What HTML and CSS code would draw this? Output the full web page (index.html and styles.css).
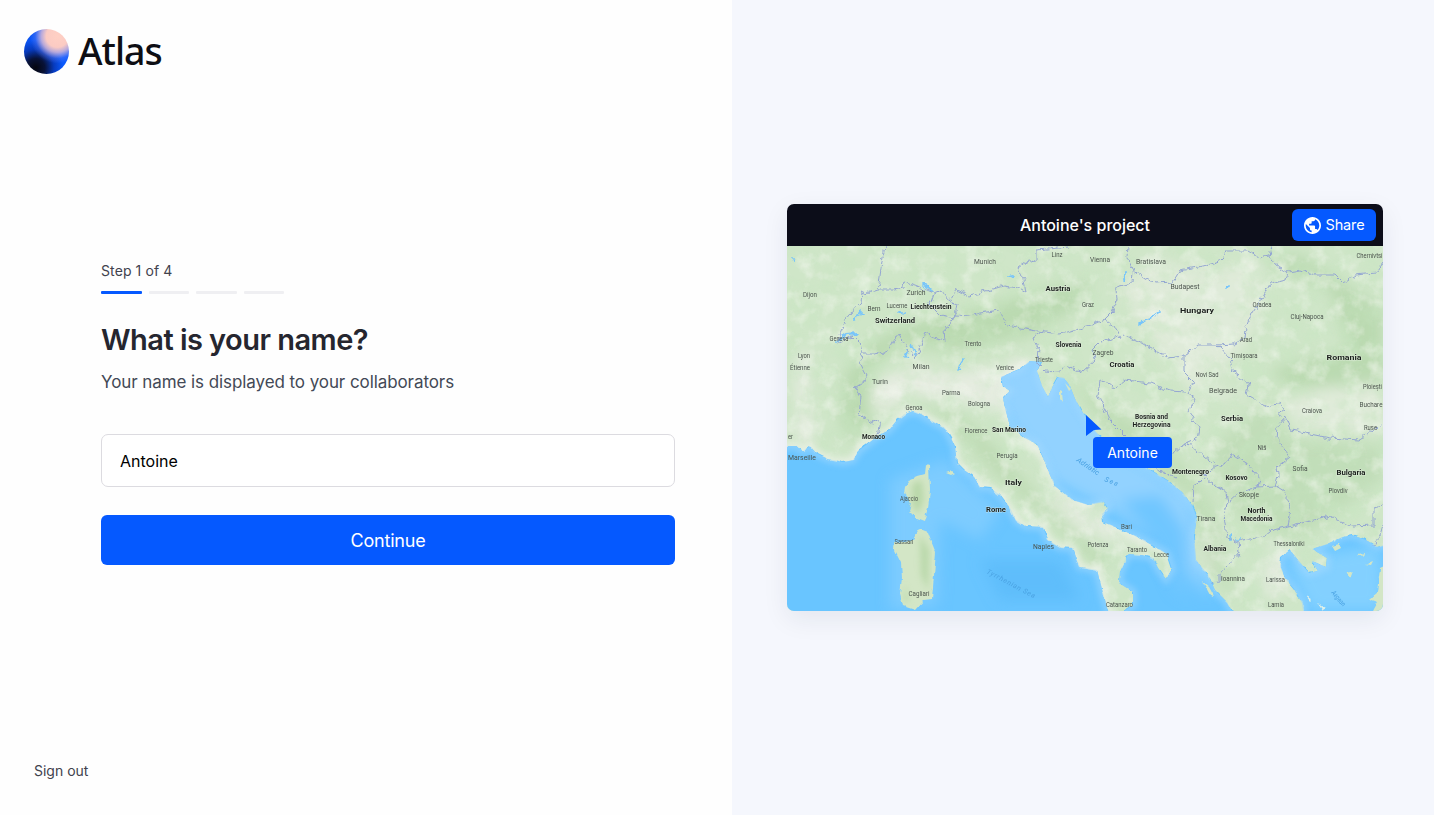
FILE: index.html
```html
<!DOCTYPE html>
<html lang="en">
<head>
	<meta charset="UTF-8">
	<title>Atlas</title>
	<link rel="stylesheet" href="styles.css">
</head>
<body>
<div class="page">
	<div class="left">
		<div class="logo">
			<div class="ball"></div>
			<span>Atlas</span>
		</div>
		<form class="step-form">
			<div class="step">Step 1 of 4</div>
			<div class="bars"><i class="on"></i><i></i><i></i><i></i></div>
			<h1>What is your name?</h1>
			<p>Your name is displayed to your collaborators</p>
			<input type="text" value="Antoine" aria-label="Name">
			<button type="button">Continue</button>
		</form>
		<a class="signout">Sign out</a>
	</div>
	<div class="right">
		<div class="card">
			<div class="bar">
				<span class="title">Antoine's project</span>
				<div class="share">
					<svg viewBox="2 2 20 20" width="17" height="17"><path fill="#fff" d="M12 2C6.48 2 2 6.48 2 12s4.48 10 10 10 10-4.48 10-10S17.52 2 12 2zm-1 17.93c-3.95-.49-7-3.85-7-7.93 0-.62.08-1.21.21-1.79L9 15v1c0 1.1.9 2 2 2v1.93zm6.9-2.54c-.26-.81-1-1.39-1.9-1.39h-1v-3c0-.55-.45-1-1-1H8v-2h2c.55 0 1-.45 1-1V7h2c1.1 0 2-.9 2-2v-.41c2.93 1.19 5 4.06 5 7.41 0 2.08-.8 3.97-2.1 5.39z"/></svg>
					<span>Share</span>
				</div>
			</div>
			<div class="map">
			<svg viewBox="787 246 596 365" width="596" height="365">
				<defs>
					<filter id="soft" x="-30%" y="-30%" width="160%" height="160%"><feGaussianBlur stdDeviation="7"/></filter>
					<filter id="soft2"><feGaussianBlur stdDeviation="3"/></filter>
					<filter id="rough" filterUnits="userSpaceOnUse" x="787" y="246" width="596" height="365">
						<feTurbulence type="fractalNoise" baseFrequency="0.16" numOctaves="2" seed="4"/>
						<feDisplacementMap in="SourceGraphic" scale="7" xChannelSelector="R" yChannelSelector="G"/>
					</filter>
					<filter id="coast" filterUnits="userSpaceOnUse" x="780" y="240" width="610" height="380">
						<feTurbulence type="fractalNoise" baseFrequency="0.12" numOctaves="2" seed="9"/>
						<feDisplacementMap in="SourceGraphic" scale="5" xChannelSelector="R" yChannelSelector="G"/>
					</filter>
					<!-- terrain relief, dark valleys and pale peaks -->
					<filter id="relief" filterUnits="userSpaceOnUse" x="787" y="246" width="596" height="365">
						<feTurbulence type="fractalNoise" baseFrequency="0.05" numOctaves="4" seed="21"/>
						<feColorMatrix values="0 0 0 0 .58  0 0 0 0 .79  0 0 0 0 .54  2.6 0 0 0 -1.1"/>
					</filter>
					<filter id="peaks" filterUnits="userSpaceOnUse" x="787" y="246" width="596" height="365">
						<feTurbulence type="fractalNoise" baseFrequency="0.055" numOctaves="4" seed="5"/>
						<feColorMatrix values="0 0 0 0 .93  0 0 0 0 .95  0 0 0 0 .9  0 2.6 0 0 -1.25"/>
					</filter>
					<clipPath id="seaclip"><use href="#tyr"/><use href="#adr"/><use href="#aeg"/></clipPath>
				</defs>
				<rect x="787" y="246" width="596" height="365" fill="#cfe6c8"/>
				<g filter="url(#soft)">
					<g fill="#e5ece0">
						<path d="M875 385L900 366L960 372L1000 366L1030 352L1040 360L1005 385L1005 415L960 402L915 393L882 412L872 405Z"/>
						<path d="M1120 290L1150 256L1200 270L1260 262L1262 310L1245 345L1210 385L1260 400L1200 400L1170 365L1145 335Z" opacity=".7"/>
						<path d="M1280 400L1383 372L1383 430L1300 430Z" opacity=".7"/>
						<path d="M795 360L808 345L812 440L798 450Z"/>
						<path d="M1040 490L1075 500L1120 530L1165 560L1130 545L1080 530Z"/>
						<path d="M1198 530L1220 530L1220 575L1202 565Z"/>
						<path d="M1270 545L1290 548L1283 600L1262 590Z"/>
					</g>
					<g fill="#b4d5a9">
						<path d="M840 420L845 375L868 345L905 325L980 308L1050 288L1090 280L1080 305L1030 335L960 350L900 345L870 370L870 425L850 440Z" opacity=".75"/>
						<path d="M915 403L960 415L1000 450L1050 510L1110 560L1095 570L1060 530L990 470L945 420Z" opacity=".6"/>
						<path d="M1065 375L1100 400L1160 440L1210 500L1235 600L1205 560L1190 495L1120 445Z" opacity=".6"/>
						<path d="M1262 260L1300 255L1383 310L1383 385L1290 388L1270 370L1350 350L1330 290Z" opacity=".75"/>
						<path d="M1210 450L1270 400L1290 440L1383 445L1383 480L1300 540L1240 520Z" opacity=".5"/>
					</g>
				</g>
				<rect x="787" y="246" width="596" height="365" filter="url(#relief)" opacity=".5"/>
				<rect x="787" y="246" width="596" height="365" filter="url(#peaks)" opacity=".5"/>
				<!-- pale strip of land along the shore -->
				<g fill="none" stroke="#edf2e8" stroke-width="7" filter="url(#soft2)" opacity=".8">
					<use href="#tyr"/><path d="M1167 554L1150 544L1120 529L1102 514M1088 505L1055 486L1043 457L1025 438L1006 412L1003 377L1030 361"/>
				</g>

				<g filter="url(#coast)">
					<g fill="#69c5ff">
						<path id="tyr" d="M780 446L797 446L803 451L810 446L816 453L828 459L843 462L853 460L858 451L870 442L878 436L889 430L897 420L905 414L913 411L921 414L932 421L945 428L951 438L955 447L957 463L964 470L974 477L980 487L990 488L1000 495L1010 508L1016 520L1025 526L1043 527L1048 540L1060 547L1073 548L1077 560L1080 567L1097 570L1101 585L1104 597L1112 625L770 625Z"/>
						<path id="adr" d="M1124 625L1124 611L1133 605L1133 592L1119 583L1120 572L1128 554L1142 555L1153 558L1158 568L1166 579L1172 569L1167 554L1150 544L1135 536L1120 529L1103 522L1102 514L1108 508L1104 502L1088 505L1072 500L1055 486L1050 475L1043 457L1037 444L1025 438L1010 426L1006 412L1003 398L1010 391L1003 386L1001 377L1020 369L1030 361L1041 362L1037 371L1042 386L1048 397L1053 386L1058 377L1064 378L1070 386L1075 399L1083 413L1095 431L1110 447L1130 459L1152 471L1168 481L1182 492L1192 505L1197 518L1194 535L1196 560L1208 575L1215 590L1227 602L1240 625Z"/>
						<path id="aeg" d="M1305 625L1302 603L1294 589L1285 578L1280 566L1281 557L1290 550L1298 560L1309 573L1318 571L1312 561L1326 567L1327 558L1312 549L1327 544L1342 537L1352 535L1366 540L1378 547L1400 540L1400 625Z"/>
					</g>
				</g>
				<g clip-path="url(#seaclip)">
					<g filter="url(#soft)">
						<path d="M1000 350L1060 370L1120 450L1190 495L1210 600L1180 560L1120 515L1050 480L1000 410Z" fill="#92d2ff"/>
						<path d="M1120 500L1160 495L1185 530L1190 600L1175 590L1150 535Z" fill="#6fc6ff"/>
						<path d="M890 480L945 460L1000 510L980 540L940 520L938 605L890 610Z" fill="#83cdff" opacity=".8"/>
						<path d="M980 560L1060 560L1080 600L1000 600Z" fill="#5fbdfb"/>
						<path d="M1285 560L1380 545L1383 611L1310 611Z" fill="#83d0ff"/>
					</g>
					<g fill="none" stroke="#a5daff" stroke-width="7" filter="url(#soft2)" opacity=".6">
						<use href="#tyr"/><use href="#adr"/><use href="#aeg"/>
					</g>
				</g>
				<!-- islands -->
				<g filter="url(#coast)" fill="#d3e6c6">
					<path d="M905 488L911 479L918 476L925 474L926 465L929 466L930 490L928 508L924 521L916 518L909 511L911 502L904 494Z"/>
					<path d="M895 542L903 543L913 539L920 529L928 532L931 540L936 552L934 575L932 599L924 600L915 610L903 606L900 594L902 578L901 563L894 549Z"/>
					<path d="M946 473l6 -2l3 2l-4 2Z"/>
					<path d="M1060 390l2 1l1 12l-3 -4ZM1065 383l6 6l-2 2ZM1069 397l5 2ZM1203 582l6 5l5 9l-4 -1Z"/>
					<path d="M1332 546l7 -2l2 4l-6 3ZM1346 573l8 -2l-3 8ZM1365 565l8 -3l-2 4ZM1358 555l6 -1l-3 3ZM1380 568l10 -5v55h-20l4 -9l4 -7l-9 -3l8 -7Z"/>
					<path d="M1306 596l6 3l-2 2ZM1318 603l8 5l-3 2ZM1335 595l4 3Z" fill="#e0f0e8"/>
				</g>
				<g filter="url(#soft2)" fill="#a9cf98" opacity=".6">
					<path d="M912 484L922 480L924 500L918 514L912 505ZM920 535L929 550L928 590L921 575ZM905 585L909 600L904 602Z"/>
				</g>
				<!-- lakes -->
				<g filter="url(#rough)" fill="none" stroke="#78c5fa" stroke-width="1.8" stroke-linecap="round">
					<path d="M1138 323L1150 319L1160 312M836 341L846 335L858 334M922 284L932 291M853 318L862 313M905 357L908 350M916 355L912 345M959 371L963 358M1124 281L1125 274M1008 277L1013 276M1230 535L1231 541M1237 541L1239 538M1226 290L1229 286M899 312L905 313M792 259L794 260"/>
				</g>
				<!-- borders -->
				<g filter="url(#rough)" fill="none" stroke="#94a6d2" stroke-width="1" stroke-linejoin="round">
					<path d="M885 246L882 262L878 290L866 294L862 292L861 302L848 316L840 333L837 343L852 336L859 343L862 354L859 361L867 376L863 382L855 387L861 396L859 415L872 423L881 420L878 435"/>
					<path d="M878 290L893 290L903 288L904 282L915 285L927 290L934 293L941 290L950 301L956 290L970 296L990 290L1003 286L1018 288L1026 293L1024 280L1018 268L1026 262L1036 260L1036 250L1070 247"/>
					<path d="M862 354L875 354L889 351L895 339L899 334L907 348L915 357L921 346L925 332L933 338L945 341L944 328L951 324L955 315L969 316L980 313L1000 310L1004 324L1030 330L1060 334L1090 326L1104 320L1112 312L1117 300L1116 287L1132 283L1133 270L1127 257L1128 246"/>
					<path d="M934 293L930 305L940 315L955 318L957 304L950 301"/>
					<path d="M1104 320L1115 328L1120 337L1100 342L1092 350L1096 360L1083 372L1068 366L1058 372L1045 371L1037 363L1038 347L1034 337L1044 330"/>
					<path d="M1133 270L1144 278L1155 283L1173 282L1180 270L1198 267L1210 264L1222 260L1225 251L1248 251L1259 258L1269 256L1271 246M1269 256L1276 266L1288 272L1300 270L1315 275L1335 275L1343 283L1355 275L1376 273L1383 263"/>
					<path d="M1288 272L1286 280L1270 284L1262 299L1251 315L1246 328L1245 338L1234 344L1216 345L1197 345L1184 356L1168 358L1150 348L1138 341L1122 333"/>
					<path d="M1218 346L1230 359L1233 371L1249 384L1247 395L1262 404L1270 408L1279 401L1284 409L1277 414L1288 420L1291 430L1310 434L1330 438L1360 440L1372 430L1383 425"/>
					<path d="M1184 356L1184 372L1194 382L1188 394L1195 398L1188 412L1200 428L1198 438L1182 445L1192 446L1216 466L1228 462L1232 454L1248 464L1260 478L1258 487"/>
					<path d="M1186 392L1170 391L1150 383L1125 380L1115 388L1100 380L1098 395L1110 420L1126 436M1146 458L1160 470L1175 478"/>
					<path d="M1182 445L1172 454L1167 468M1216 466L1205 475L1213 484L1226 492L1228 503L1240 492L1257 487L1275 486L1278 476L1277 468L1290 457L1276 438L1277 428L1285 418"/>
					<path d="M1193 502L1194 485L1205 478M1228 503L1224 515L1227 538L1238 543L1239 553L1228 566L1219 574L1219 582L1211 583M1238 541L1262 537L1270 531L1288 526L1291 508L1283 491L1275 486M1288 526L1315 520L1330 516L1350 526L1374 525L1374 508L1383 506M1374 546L1380 535L1383 525"/>
				</g>
				<g class="sea">
					<text transform="translate(1076 461) rotate(34)" textLength="26" lengthAdjust="spacingAndGlyphs">Adriatic</text>
					<text transform="translate(1104 481) rotate(22)" textLength="14">Sea</text>
					<text transform="translate(986 573) rotate(28)" textLength="54">Tyrrhenian Sea</text>
					<text transform="translate(1331 593) rotate(50)" textLength="18" lengthAdjust="spacingAndGlyphs">Aegean</text>
				</g>
				<g class="city">
					<text x="985" y="264" textLength="22" lengthAdjust="spacingAndGlyphs">Munich</text>
					<text x="1057" y="257" textLength="11" lengthAdjust="spacingAndGlyphs">Linz</text>
					<text x="1100" y="262" textLength="20" lengthAdjust="spacingAndGlyphs">Vienna</text>
					<text x="1151" y="264" textLength="30" lengthAdjust="spacingAndGlyphs">Bratislava</text>
					<text x="1369.500" y="258" textLength="26" lengthAdjust="spacingAndGlyphs">Chernivtsi</text>
					<text x="1185" y="289" textLength="29" lengthAdjust="spacingAndGlyphs">Budapest</text>
					<text x="810" y="297" textLength="14" lengthAdjust="spacingAndGlyphs">Dijon</text>
					<text x="916" y="295" textLength="19" lengthAdjust="spacingAndGlyphs">Zurich</text>
					<text x="897" y="308" textLength="21" lengthAdjust="spacingAndGlyphs">Lucerne</text>
					<text x="874" y="311" textLength="13" lengthAdjust="spacingAndGlyphs">Bern</text>
					<text x="1088" y="306.500" textLength="12" lengthAdjust="spacingAndGlyphs">Graz</text>
					<text x="1262" y="307" textLength="19" lengthAdjust="spacingAndGlyphs">Oradea</text>
					<text x="1307" y="318.500" textLength="33" lengthAdjust="spacingAndGlyphs">Cluj-Napoca</text>
					<text x="839" y="341" textLength="19" lengthAdjust="spacingAndGlyphs">Geneva</text>
					<text x="973" y="346" textLength="17" lengthAdjust="spacingAndGlyphs">Trento</text>
					<text x="804" y="358" textLength="12" lengthAdjust="spacingAndGlyphs">Lyon</text>
					<text x="800" y="370" textLength="20" lengthAdjust="spacingAndGlyphs">Étienne</text>
					<text x="921" y="368.500" textLength="17" lengthAdjust="spacingAndGlyphs">Milan</text>
					<text x="880" y="383.500" textLength="16" lengthAdjust="spacingAndGlyphs">Turin</text>
					<text x="951" y="394.500" textLength="18" lengthAdjust="spacingAndGlyphs">Parma</text>
					<text x="979" y="406" textLength="22" lengthAdjust="spacingAndGlyphs">Bologna</text>
					<text x="914" y="409.500" textLength="17" lengthAdjust="spacingAndGlyphs">Genoa</text>
					<text x="976" y="433" textLength="23" lengthAdjust="spacingAndGlyphs">Florence</text>
					<text x="1007" y="457.500" textLength="21" lengthAdjust="spacingAndGlyphs">Perugia</text>
					<text x="790.500" y="439" textLength="5" lengthAdjust="spacingAndGlyphs">er</text>
					<text x="802" y="460" textLength="28" lengthAdjust="spacingAndGlyphs">Marseille</text>
					<text x="1005" y="370" textLength="18" lengthAdjust="spacingAndGlyphs">Venice</text>
					<text x="1044" y="362" textLength="18" lengthAdjust="spacingAndGlyphs">Trieste</text>
					<text x="1103" y="355" textLength="21" lengthAdjust="spacingAndGlyphs">Zagreb</text>
					<text x="1246" y="342" textLength="12" lengthAdjust="spacingAndGlyphs">Arad</text>
					<text x="1244" y="358" textLength="27" lengthAdjust="spacingAndGlyphs">Timișoara</text>
					<text x="1207" y="377" textLength="23" lengthAdjust="spacingAndGlyphs">Novi Sad</text>
					<text x="1223" y="393" textLength="28" lengthAdjust="spacingAndGlyphs">Belgrade</text>
					<text x="1372.500" y="389" textLength="19" lengthAdjust="spacingAndGlyphs">Ploiești</text>
					<text x="1371" y="407" textLength="23" lengthAdjust="spacingAndGlyphs">Buchare</text>
					<text x="1312" y="412.500" textLength="20" lengthAdjust="spacingAndGlyphs">Craiova</text>
					<text x="1370.500" y="430" textLength="13" lengthAdjust="spacingAndGlyphs">Ruse</text>
					<text x="1262" y="449.500" textLength="9" lengthAdjust="spacingAndGlyphs">Niš</text>
					<text x="1300" y="471" textLength="15" lengthAdjust="spacingAndGlyphs">Sofia</text>
					<text x="1338" y="492.500" textLength="19" lengthAdjust="spacingAndGlyphs">Plovdiv</text>
					<text x="1249" y="497" textLength="20" lengthAdjust="spacingAndGlyphs">Skopje</text>
					<text x="1206" y="521" textLength="19" lengthAdjust="spacingAndGlyphs">Tirana</text>
					<text x="909" y="500.500" textLength="18" lengthAdjust="spacingAndGlyphs">Ajaccio</text>
					<text x="904" y="543.500" textLength="19" lengthAdjust="spacingAndGlyphs">Sassari</text>
					<text x="919" y="596" textLength="21" lengthAdjust="spacingAndGlyphs">Cagliari</text>
					<text x="1126.500" y="529" textLength="11" lengthAdjust="spacingAndGlyphs">Bari</text>
					<text x="1043.500" y="549" textLength="21" lengthAdjust="spacingAndGlyphs">Naples</text>
					<text x="1098" y="546.500" textLength="21" lengthAdjust="spacingAndGlyphs">Potenza</text>
					<text x="1137" y="552" textLength="20" lengthAdjust="spacingAndGlyphs">Taranto</text>
					<text x="1161.500" y="556.500" textLength="15" lengthAdjust="spacingAndGlyphs">Lecce</text>
					<text x="1119.500" y="606.500" textLength="27" lengthAdjust="spacingAndGlyphs">Catanzaro</text>
					<text x="1289" y="546" textLength="31" lengthAdjust="spacingAndGlyphs">Thessaloniki</text>
					<text x="1233" y="580.500" textLength="24" lengthAdjust="spacingAndGlyphs">Ioannina</text>
					<text x="1275.500" y="581.500" textLength="19" lengthAdjust="spacingAndGlyphs">Larissa</text>
					<text x="1276" y="607" textLength="16" lengthAdjust="spacingAndGlyphs">Lamia</text>
				</g>
				<g class="country">
					<text x="1058" y="290.500" textLength="25" lengthAdjust="spacingAndGlyphs">Austria</text>
					<text x="931" y="308.500" textLength="41" lengthAdjust="spacingAndGlyphs">Liechtenstein</text>
					<text x="895" y="322.500" textLength="40" lengthAdjust="spacingAndGlyphs">Switzerland</text>
					<text x="1197" y="312.500" textLength="34" lengthAdjust="spacingAndGlyphs" class="big">Hungary</text>
					<text x="1068.500" y="347" textLength="26" lengthAdjust="spacingAndGlyphs">Slovenia</text>
					<text x="1122" y="366.500" textLength="25" lengthAdjust="spacingAndGlyphs">Croatia</text>
					<text x="1344" y="360" textLength="35" lengthAdjust="spacingAndGlyphs" class="big">Romania</text>
					<text x="1232" y="421" textLength="22" lengthAdjust="spacingAndGlyphs">Serbia</text>
					<text x="1151.500" y="419" textLength="33" lengthAdjust="spacingAndGlyphs">Bosnia and</text>
					<text x="1151.500" y="427" textLength="38" lengthAdjust="spacingAndGlyphs">Herzegovina</text>
					<text x="1009" y="431.500" textLength="34" lengthAdjust="spacingAndGlyphs">San Marino</text>
					<text x="873.500" y="438.500" textLength="23" lengthAdjust="spacingAndGlyphs">Monaco</text>
					<text x="1190.500" y="473.500" textLength="37" lengthAdjust="spacingAndGlyphs">Montenegro</text>
					<text x="1236.500" y="479.500" textLength="22" lengthAdjust="spacingAndGlyphs">Kosovo</text>
					<text x="1351" y="475" textLength="29" lengthAdjust="spacingAndGlyphs">Bulgaria</text>
					<text x="1013.500" y="485" textLength="17" lengthAdjust="spacingAndGlyphs" class="big">Italy</text>
					<text x="996" y="512" textLength="20" lengthAdjust="spacingAndGlyphs">Rome</text>
					<text x="1256.500" y="513" textLength="18" lengthAdjust="spacingAndGlyphs">North</text>
					<text x="1256.500" y="521" textLength="32" lengthAdjust="spacingAndGlyphs">Macedonia</text>
					<text x="1215" y="551" textLength="23" lengthAdjust="spacingAndGlyphs">Albania</text>
				</g>
			</svg>
			<svg class="cursor" viewBox="0 0 16 21" width="16" height="21"><path fill="#0559ff" d="M0 0L15.500 14.500L8 15L0 21Z"/></svg>
			<div class="tag">Antoine</div>
			</div>
		</div>
	</div>
</div>
</body>
</html>
```

FILE: styles.css
```css
	* {
		box-sizing: border-box;
	}
	html,body{
		margin: 0;
		height: 100%;
		font-family: Inter, "Liberation Sans", sans-serif;
	}
	.page {
		display: flex;
		height: 815px;
		overflow: hidden;
	}
	.left {
		width: 732px;
		padding: 29px 57px 35px 24px;
		display: flex;
		flex-direction: column;
		background: #fefefe;
	}
	.logo {
		display: flex;
		align-items: center;
		gap: 9px;
		height: 45px;
		font: 500 37.500px/43px "Noto Sans", sans-serif;
		letter-spacing: -1px;
		color: #0e0e14;
	}
	.logo span {
		padding-bottom: 2px;
	}
	.ball {
		width: 45px;
		height: 45px;
		border-radius: 50%;
		background:
			radial-gradient(circle at 74% 16%, #ffd0c4 0, #fbcbc3 22%, rgba(225,190,215,.8) 32%, rgba(120,140,250,.3) 44%, rgba(60,110,255,0) 54%),
			radial-gradient(circle at 26% 86%, #05060f 0, #081238 18%, rgba(5,40,150,.6) 36%, rgba(5,89,255,0) 54%),
			linear-gradient(100deg, #0a52f0, #0a5aff);
	}
	.step-form {
		margin: 187px 0 0 77px;
		width: 574px;
	}
	.step {
		font-size: 14px;
		line-height: 20px;
		letter-spacing: .1px;
		color: #41424d;
	}
	.bars {
		display: flex;
		gap: 7px;
		margin-top: 10px;
	}
	.bars i {
		width: 40.500px;
		height: 3px;
		border-radius: 1px;
		background: #efeff2;
	}
	.bars .on {
		background: #0559ff;
	}
	h1 {
		margin: 28px 0 0;
		font-size: 29px;
		line-height: 36px;
		font-weight: 600;
		letter-spacing: -.53px;
		color: #25262f;
	}
	p {
		margin: 11px 0 0;
		font-size: 17px;
		line-height: 26px;
		letter-spacing: -.08px;
		color: #434956;
	}
	input {
		display: block;
		width: 100%;
		height: 53px;
		margin-top: 39px;
		padding: 0 18px;
		border: 1px solid #dcdbe0;
		border-radius: 7px;
		background: #fff;
		color: #000;
		font: 16px Inter, sans-serif;
	}
	button {
		display: block;
		width: 100%;
		height: 50px;
		margin-top: 28px;
		border: 0;
		border-radius: 6px;
		background: #0559ff;
		color: #fff;
		font: 18px Inter, sans-serif;
		letter-spacing: -.2px;
	}
	.signout {
		margin: auto 0 0 10px;
		font-size: 14px;
		line-height: 18px;
		color: #41424d;
	}
	.right {
		flex: 1;
		padding: 204px 51px 0 55px;
		background: #f5f7fd;
	}
	.card {
		width: 596px;
		height: 407px;
		border-radius: 7px;
		overflow: hidden;
		box-shadow: 0 8px 26px rgba(30,35,60,.08);
	}
	.bar {
		height: 42px;
		padding: 0 7px;
		display: grid;
		grid-template-columns: 84px 1fr 84px;
		align-items: center;
		background: #0c0d19;
		color: #fff;
	}
	.title {
		grid-column: 2;
		text-align: center;
		font-size: 16px;
		font-weight: 500;
		padding-bottom: 1px;
	}
	.share {
		height: 32px;
		display: flex;
		align-items: center;
		justify-content: center;
		gap: 5px;
		border-radius: 6px;
		background: #0559ff;
		font-size: 14.500px;
		letter-spacing: -.15px;
	}
	.share span {
		padding-bottom: 1px;
	}
	.map {
		position: relative;
		height: 365px;
	}
	.map svg {
		display: block;
	}
	.map text {
		font-family: Roboto, sans-serif;
		text-anchor: middle;
	}
	.city {
		font-size: 6.500px;
		fill: #4b534d;
	}
	.country {
		font-size: 7px;
		font-weight: 700;
		fill: #1c211e;
		stroke: rgba(240,246,236,.5);
		stroke-width: 1px;
		paint-order: stroke;
	}
	.country .big {
		font-size: 8px;
	}
	.sea {
		font-size: 7px;
		font-style: italic;
		fill: #4aa2e2;
	}
	.map .sea text {
		text-anchor: start;
	}
	.map .cursor {
		position: absolute;
		left: 299px;
		top: 169px;
	}
	.tag {
		position: absolute;
		left: 306px;
		top: 191px;
		width: 79px;
		height: 31px;
		border-radius: 4px;
		background: #0559ff;
		color: #fff;
		font-size: 14px;
		line-height: 31px;
		text-align: center;
	}
```
